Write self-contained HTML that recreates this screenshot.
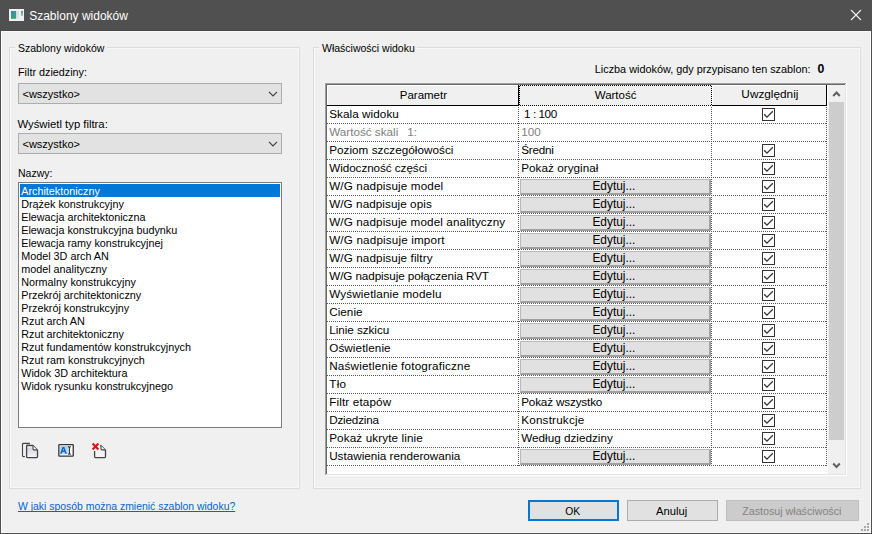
<!DOCTYPE html>
<html><head><meta charset="utf-8"><style>
html,body{margin:0;padding:0;}
body{width:872px;height:534px;position:relative;overflow:hidden;background:#f0f0f0;font-family:"Liberation Sans", sans-serif;}
body>div{position:absolute;}
.t{white-space:nowrap;}
</style></head><body>
<div style="left:0px;top:0px;width:872px;height:31px;background:#505050"></div>
<div style="left:0px;top:30px;width:872px;height:1px;background:#484848"></div>
<div style="left:0px;top:0px;width:1px;height:534px;background:#4f4f4f"></div>
<div style="left:871px;top:0px;width:1px;height:534px;background:#4f4f4f"></div>
<div style="left:0px;top:533px;width:872px;height:1px;background:#4f4f4f"></div>
<div style="left:1px;top:31px;width:870px;height:1px;background:#fafafa"></div>
<div style="left:1px;top:31px;width:1px;height:502px;background:#fafafa"></div>
<div style="left:870px;top:31px;width:1px;height:502px;background:#fafafa"></div>
<div style="left:1px;top:532px;width:870px;height:1px;background:#fafafa"></div>
<svg style="position:absolute;left:8px;top:8px" width="17" height="14" viewBox="0 0 17 14">
<defs><linearGradient id="tg" x1="0" y1="0" x2="1" y2="1"><stop offset="0" stop-color="#4a7fb0"/><stop offset="1" stop-color="#2fb06a"/></linearGradient>
<linearGradient id="tg2" x1="0" y1="0" x2="0" y2="1"><stop offset="0" stop-color="#5a86c0"/><stop offset="1" stop-color="#8fe08f"/></linearGradient></defs>
<rect x="1" y="1" width="15" height="12" fill="#f0f0f0"/>
<rect x="3" y="3" width="5.2" height="7.8" fill="url(#tg)"/>
<rect x="9.3" y="3" width="1.6" height="8" fill="#dcdcdc"/>
<rect x="13" y="3" width="2" height="5" fill="url(#tg2)"/>
</svg>
<div class="t" style="left:29.2px;top:7.84px;height:16px;line-height:16px;font-size:12px;color:#fff;font-weight:normal;">Szablony widoków</div>
<svg style="position:absolute;left:848px;top:7px" width="16" height="16" viewBox="0 0 16 16"><path d="M3.4 3.4 L12.6 12.6 M12.6 3.4 L3.4 12.6" stroke="#fff" stroke-width="1.2" stroke-linecap="round"/></svg>
<div style="left:9px;top:47px;width:291px;height:442px;border:1px solid #dcdcdc;box-sizing:border-box;box-shadow:inset 0 0 0 1px #f8f8f8;"></div>
<div class="t" style="left:15px;top:40px;width:92px;height:14px;background:#f0f0f0"></div>
<div class="t" style="left:18px;top:41.36px;height:14px;line-height:14px;font-size:10.5px;color:#000;font-weight:normal;">Szablony widoków</div>
<div class="t" style="left:18px;top:65.26px;height:14px;line-height:14px;font-size:10.8px;color:#000;font-weight:normal;">Filtr dziedziny:</div>
<div style="left:18px;top:83px;width:264px;height:21px;background:#e2e2e2;border:1px solid #adadad;box-sizing:border-box;"></div>
<svg style="position:absolute;left:268px;top:91px" width="10" height="6" viewBox="0 0 10 6"><path d="M1 0.8 L5 4.8 L9 0.8" stroke="#404040" stroke-width="1.2" fill="none"/></svg>
<div class="t" style="left:22.5px;top:86.69px;height:14px;line-height:14px;font-size:11px;color:#000;font-weight:normal;">&lt;wszystko&gt;</div>
<div class="t" style="left:17.5px;top:116.58px;height:15px;line-height:15px;font-size:11.3px;color:#000;font-weight:normal;">Wyświetl typ filtra:</div>
<div style="left:18px;top:133px;width:264px;height:21px;background:#e2e2e2;border:1px solid #adadad;box-sizing:border-box;"></div>
<svg style="position:absolute;left:268px;top:141px" width="10" height="6" viewBox="0 0 10 6"><path d="M1 0.8 L5 4.8 L9 0.8" stroke="#404040" stroke-width="1.2" fill="none"/></svg>
<div class="t" style="left:22.5px;top:136.69px;height:14px;line-height:14px;font-size:11px;color:#000;font-weight:normal;">&lt;wszystko&gt;</div>
<div class="t" style="left:18px;top:165.86px;height:14px;line-height:14px;font-size:10.5px;color:#000;font-weight:normal;">Nazwy:</div>
<div style="left:18px;top:182px;width:264px;height:246px;background:#fff;border:1px solid #7b7b82;box-sizing:border-box;"></div>
<div style="left:20px;top:184px;width:260px;height:13px;background:#0078d7"></div>
<div class="t" style="left:21.2px;top:183.86px;height:14px;line-height:14px;font-size:10.8px;color:#fff;font-weight:normal;">Architektoniczny</div>
<div class="t" style="left:21.2px;top:196.86px;height:14px;line-height:14px;font-size:10.8px;color:#000;font-weight:normal;">Drążek konstrukcyjny</div>
<div class="t" style="left:21.2px;top:209.86px;height:14px;line-height:14px;font-size:10.8px;color:#000;font-weight:normal;">Elewacja architektoniczna</div>
<div class="t" style="left:21.2px;top:222.86px;height:14px;line-height:14px;font-size:10.8px;color:#000;font-weight:normal;">Elewacja konstrukcyjna budynku</div>
<div class="t" style="left:21.2px;top:235.86px;height:14px;line-height:14px;font-size:10.8px;color:#000;font-weight:normal;">Elewacja ramy konstrukcyjnej</div>
<div class="t" style="left:21.2px;top:248.86px;height:14px;line-height:14px;font-size:10.8px;color:#000;font-weight:normal;">Model 3D arch AN</div>
<div class="t" style="left:21.2px;top:261.86px;height:14px;line-height:14px;font-size:10.8px;color:#000;font-weight:normal;">model analityczny</div>
<div class="t" style="left:21.2px;top:274.86px;height:14px;line-height:14px;font-size:10.8px;color:#000;font-weight:normal;">Normalny konstrukcyjny</div>
<div class="t" style="left:21.2px;top:287.86px;height:14px;line-height:14px;font-size:10.8px;color:#000;font-weight:normal;">Przekrój architektoniczny</div>
<div class="t" style="left:21.2px;top:300.86px;height:14px;line-height:14px;font-size:10.8px;color:#000;font-weight:normal;">Przekrój konstrukcyjny</div>
<div class="t" style="left:21.2px;top:313.86px;height:14px;line-height:14px;font-size:10.8px;color:#000;font-weight:normal;">Rzut arch AN</div>
<div class="t" style="left:21.2px;top:326.86px;height:14px;line-height:14px;font-size:10.8px;color:#000;font-weight:normal;">Rzut architektoniczny</div>
<div class="t" style="left:21.2px;top:339.86px;height:14px;line-height:14px;font-size:10.8px;color:#000;font-weight:normal;">Rzut fundamentów konstrukcyjnych</div>
<div class="t" style="left:21.2px;top:352.86px;height:14px;line-height:14px;font-size:10.8px;color:#000;font-weight:normal;">Rzut ram konstrukcyjnych</div>
<div class="t" style="left:21.2px;top:365.86px;height:14px;line-height:14px;font-size:10.8px;color:#000;font-weight:normal;">Widok 3D architektura</div>
<div class="t" style="left:21.2px;top:378.86px;height:14px;line-height:14px;font-size:10.8px;color:#000;font-weight:normal;">Widok rysunku konstrukcyjnego</div>
<svg style="position:absolute;left:20px;top:440px" width="20" height="20" viewBox="0 0 20 20">
<defs><linearGradient id="pg" x1="0" y1="0" x2="0" y2="1"><stop offset="0" stop-color="#ffffff"/><stop offset="0.12" stop-color="#ffffff"/><stop offset="0.2" stop-color="#d6d6de"/><stop offset="1" stop-color="#f6f6f8"/></linearGradient></defs>
<path d="M9.9 3.5 H3.4 Q2.6 3.5 2.6 4.3 V15.7 Q2.6 16.5 3.4 16.5 H4.8" stroke="#444" stroke-width="1.3" fill="none"/>
<path d="M3.3 4.2 H6 V16 H3.3 Z" fill="#f2f2f6"/>
<path d="M7.4 5.5 H12.9 L17.5 10.1 V16.8 Q17.5 17.6 16.7 17.6 H7.4 Q6.6 17.6 6.6 16.8 V6.3 Q6.6 5.5 7.4 5.5 Z" stroke="#444" stroke-width="1.3" fill="url(#pg)" stroke-linejoin="round"/>
<path d="M13 5.8 V9.1 Q13 9.9 13.8 9.9 H17.3" stroke="#444" stroke-width="1.1" fill="#fff"/>
</svg>
<svg style="position:absolute;left:56px;top:440px" width="20" height="20" viewBox="0 0 20 20">
<defs><linearGradient id="hg" x1="0" y1="0" x2="1" y2="1"><stop offset="0" stop-color="#8cc4ec"/><stop offset="1" stop-color="#c4e4f8"/></linearGradient></defs>
<rect x="2.85" y="4.55" width="14.4" height="11.5" rx="0.6" stroke="#333" stroke-width="1.3" fill="#fff"/>
<rect x="4.3" y="6.1" width="8" height="8.2" fill="url(#hg)"/>
<path fill-rule="evenodd" fill="#1565c8" d="M4 13.8 L6.6 6.9 L8.3 6.9 L10.9 13.8 L9.2 13.8 L8.6 12.1 L6.3 12.1 L5.7 13.8 Z M6.8 10.6 L7.45 8.6 L8.1 10.6 Z"/>
<path d="M12 6.6 Q13.4 6.6 13.4 7.8 Q13.4 6.6 14.8 6.6 M13.4 7.4 V13.6 M12 14.3 Q13.4 14.3 13.4 13.1 Q13.4 14.3 14.8 14.3" stroke="#333" stroke-width="1.15" fill="none"/>
</svg>
<svg style="position:absolute;left:88px;top:440px" width="20" height="20" viewBox="0 0 20 20">
<path d="M12.2 5.6 H13 L17.5 10.1 V16.8 Q17.5 17.6 16.7 17.6 H7.4 Q6.6 17.6 6.6 16.8 V11" stroke="#444" stroke-width="1.3" fill="#f4f4f6" stroke-linejoin="round"/>
<path d="M13 5.8 V9.1 Q13 9.9 13.8 9.9 H17.3" stroke="#444" stroke-width="1.1" fill="#fff"/>
<path d="M4.6 3.6 L10.4 9.4 M10.4 3.6 L4.6 9.4" stroke="#dc1414" stroke-width="2.1"/>
</svg>
<div class="t" style="left:18px;top:500.29px;height:14px;line-height:14px;font-size:10.43px;color:#0066cc;font-weight:normal;"><u style="text-decoration-skip-ink:none">W jaki sposób można zmienić szablon widoku?</u></div>
<div style="left:313px;top:47px;width:548px;height:442px;border:1px solid #dcdcdc;box-sizing:border-box;box-shadow:inset 0 0 0 1px #f8f8f8;"></div>
<div class="t" style="left:319px;top:40px;width:98px;height:14px;background:#f0f0f0"></div>
<div class="t" style="left:322px;top:41.36px;height:14px;line-height:14px;font-size:10.5px;color:#000;font-weight:normal;">Właściwości widoku</div>
<div class="t" style="left:594.8px;top:61.84px;height:14px;line-height:14px;font-size:10.85px;color:#000;font-weight:normal;">Liczba widoków, gdy przypisano ten szablon:</div>
<div class="t" style="left:817.4px;top:61.04px;height:16px;line-height:16px;font-size:12.3px;color:#000;font-weight:bold;">0</div>
<div style="left:325px;top:83px;width:522px;height:393px;background:#fff"></div>
<div style="left:325px;top:83px;width:521px;height:1px;background:#a0a0a0"></div>
<div style="left:325px;top:83px;width:1px;height:392px;background:#a0a0a0"></div>
<div style="left:326px;top:84px;width:519px;height:1px;background:#696969"></div>
<div style="left:326px;top:84px;width:1px;height:390px;background:#696969"></div>
<div style="left:326px;top:474px;width:520px;height:1px;background:#e3e3e3"></div>
<div style="left:845px;top:84px;width:1px;height:391px;background:#e3e3e3"></div>
<div style="left:327px;top:85px;width:500px;height:21px;background:#f0f0f0"></div>
<div style="left:327px;top:85px;width:191px;height:1px;background:#fff"></div>
<div style="left:327px;top:85px;width:1px;height:20px;background:#fff"></div>
<div style="left:518px;top:85px;width:1px;height:21px;background:#000"></div>
<div style="left:327px;top:105px;width:192px;height:1px;background:#000"></div>
<div style="left:519px;top:85px;width:193px;height:1px;background-image:linear-gradient(to right,#000 50%,transparent 50%);background-size:2px 1px;background-position:1px 0;"></div>
<div style="left:519px;top:105px;width:193px;height:1px;background-image:linear-gradient(to right,#000 50%,transparent 50%);background-size:2px 1px;background-position:1px 0;"></div>
<div style="left:519px;top:85px;width:1px;height:21px;background-image:linear-gradient(to bottom,#000 50%,transparent 50%);background-size:1px 2px;background-position:0 1px;"></div>
<div style="left:711px;top:85px;width:1px;height:21px;background-image:linear-gradient(to bottom,#000 50%,transparent 50%);background-size:1px 2px;background-position:0 1px;"></div>
<div style="left:712px;top:85px;width:114px;height:1px;background:#fff"></div>
<div style="left:712px;top:85px;width:1px;height:20px;background:#fff"></div>
<div style="left:826px;top:85px;width:1px;height:21px;background:#000"></div>
<div style="left:712px;top:105px;width:115px;height:1px;background:#000"></div>
<div class="t" style="left:328.40px;width:190px;text-align:center;top:87.52px;height:15px;line-height:15px;font-size:11.5px;color:#000;font-weight:normal;">Parametr</div>
<div class="t" style="left:520.60px;width:190px;text-align:center;top:87.52px;height:15px;line-height:15px;font-size:11.5px;color:#000;font-weight:normal;">Wartość</div>
<div class="t" style="left:712.90px;width:114px;text-align:center;top:87.41px;height:15px;line-height:15px;font-size:11.8px;color:#000;font-weight:normal;">Uwzględnij</div>
<div style="left:327px;top:123px;width:500px;height:1px;background-image:linear-gradient(to right,#585858 50%,transparent 50%);background-size:2px 1px;"></div>
<div class="t" style="left:329.2px;top:106.45px;height:15px;line-height:15px;font-size:11.7px;color:#000;font-weight:normal;letter-spacing:0.073px;">Skala widoku</div>
<div class="t" style="left:521.2px;top:106.45px;height:15px;line-height:15px;font-size:11.7px;color:#000;font-weight:normal;letter-spacing:-0.429px;">&nbsp;1 : 100</div>
<svg style="position:absolute;left:762px;top:108px" width="13" height="13" viewBox="0 0 13 13"><rect x="0.5" y="0.5" width="12" height="12" fill="#fff" stroke="#333" stroke-width="1"/><path d="M2.2 6.3 L5 9.1 L10.8 3.3" stroke="#333" stroke-width="1.3" fill="none"/></svg>
<div style="left:327px;top:141px;width:500px;height:1px;background-image:linear-gradient(to right,#585858 50%,transparent 50%);background-size:2px 1px;"></div>
<div class="t" style="left:407.2px;top:124.45px;height:15px;line-height:15px;font-size:11.7px;color:#808080;font-weight:normal;">1:</div>
<div class="t" style="left:329.2px;top:124.45px;height:15px;line-height:15px;font-size:11.7px;color:#808080;font-weight:normal;letter-spacing:0px;">Wartość skali</div>
<div class="t" style="left:521.2px;top:124.45px;height:15px;line-height:15px;font-size:11.7px;color:#808080;font-weight:normal;letter-spacing:0.05px;">100</div>
<div style="left:327px;top:159px;width:500px;height:1px;background-image:linear-gradient(to right,#585858 50%,transparent 50%);background-size:2px 1px;"></div>
<div class="t" style="left:329.2px;top:142.45px;height:15px;line-height:15px;font-size:11.7px;color:#000;font-weight:normal;letter-spacing:0.04px;">Poziom szczegółowości</div>
<div class="t" style="left:521.2px;top:142.45px;height:15px;line-height:15px;font-size:11.7px;color:#000;font-weight:normal;letter-spacing:-0.22px;">Średni</div>
<svg style="position:absolute;left:762px;top:144px" width="13" height="13" viewBox="0 0 13 13"><rect x="0.5" y="0.5" width="12" height="12" fill="#fff" stroke="#333" stroke-width="1"/><path d="M2.2 6.3 L5 9.1 L10.8 3.3" stroke="#333" stroke-width="1.3" fill="none"/></svg>
<div style="left:327px;top:177px;width:500px;height:1px;background-image:linear-gradient(to right,#585858 50%,transparent 50%);background-size:2px 1px;"></div>
<div class="t" style="left:329.2px;top:160.45px;height:15px;line-height:15px;font-size:11.7px;color:#000;font-weight:normal;letter-spacing:-0.056px;">Widoczność części</div>
<div class="t" style="left:521.2px;top:160.45px;height:15px;line-height:15px;font-size:11.7px;color:#000;font-weight:normal;letter-spacing:0.046px;">Pokaż oryginał</div>
<svg style="position:absolute;left:762px;top:162px" width="13" height="13" viewBox="0 0 13 13"><rect x="0.5" y="0.5" width="12" height="12" fill="#fff" stroke="#333" stroke-width="1"/><path d="M2.2 6.3 L5 9.1 L10.8 3.3" stroke="#333" stroke-width="1.3" fill="none"/></svg>
<div style="left:327px;top:195px;width:500px;height:1px;background-image:linear-gradient(to right,#585858 50%,transparent 50%);background-size:2px 1px;"></div>
<div class="t" style="left:329.2px;top:178.45px;height:15px;line-height:15px;font-size:11.7px;color:#000;font-weight:normal;letter-spacing:0.122px;">W/G nadpisuje model</div>
<div style="left:520px;top:179px;width:191px;height:16px;background:#e1e1e1;border-style:solid;border-color:#b9b9b9 #a0a0a0 #a0a0a0 #b9b9b9;border-width:1px 2px 2px 1px;box-sizing:border-box;"></div>
<div class="t" style="left:518.90px;width:190px;text-align:center;top:179.18px;height:15px;line-height:15px;font-size:11.9px;color:#000;font-weight:normal;">Edytuj...</div>
<svg style="position:absolute;left:762px;top:180px" width="13" height="13" viewBox="0 0 13 13"><rect x="0.5" y="0.5" width="12" height="12" fill="#fff" stroke="#333" stroke-width="1"/><path d="M2.2 6.3 L5 9.1 L10.8 3.3" stroke="#333" stroke-width="1.3" fill="none"/></svg>
<div style="left:327px;top:213px;width:500px;height:1px;background-image:linear-gradient(to right,#585858 50%,transparent 50%);background-size:2px 1px;"></div>
<div class="t" style="left:329.2px;top:196.45px;height:15px;line-height:15px;font-size:11.7px;color:#000;font-weight:normal;letter-spacing:0.071px;">W/G nadpisuje opis</div>
<div style="left:520px;top:197px;width:191px;height:16px;background:#e1e1e1;border-style:solid;border-color:#b9b9b9 #a0a0a0 #a0a0a0 #b9b9b9;border-width:1px 2px 2px 1px;box-sizing:border-box;"></div>
<div class="t" style="left:518.90px;width:190px;text-align:center;top:197.18px;height:15px;line-height:15px;font-size:11.9px;color:#000;font-weight:normal;">Edytuj...</div>
<svg style="position:absolute;left:762px;top:198px" width="13" height="13" viewBox="0 0 13 13"><rect x="0.5" y="0.5" width="12" height="12" fill="#fff" stroke="#333" stroke-width="1"/><path d="M2.2 6.3 L5 9.1 L10.8 3.3" stroke="#333" stroke-width="1.3" fill="none"/></svg>
<div style="left:327px;top:231px;width:500px;height:1px;background-image:linear-gradient(to right,#585858 50%,transparent 50%);background-size:2px 1px;"></div>
<div class="t" style="left:329.2px;top:214.45px;height:15px;line-height:15px;font-size:11.7px;color:#000;font-weight:normal;letter-spacing:0.107px;">W/G nadpisuje model analityczny</div>
<div style="left:520px;top:215px;width:191px;height:16px;background:#e1e1e1;border-style:solid;border-color:#b9b9b9 #a0a0a0 #a0a0a0 #b9b9b9;border-width:1px 2px 2px 1px;box-sizing:border-box;"></div>
<div class="t" style="left:518.90px;width:190px;text-align:center;top:215.18px;height:15px;line-height:15px;font-size:11.9px;color:#000;font-weight:normal;">Edytuj...</div>
<svg style="position:absolute;left:762px;top:216px" width="13" height="13" viewBox="0 0 13 13"><rect x="0.5" y="0.5" width="12" height="12" fill="#fff" stroke="#333" stroke-width="1"/><path d="M2.2 6.3 L5 9.1 L10.8 3.3" stroke="#333" stroke-width="1.3" fill="none"/></svg>
<div style="left:327px;top:249px;width:500px;height:1px;background-image:linear-gradient(to right,#585858 50%,transparent 50%);background-size:2px 1px;"></div>
<div class="t" style="left:329.2px;top:232.45px;height:15px;line-height:15px;font-size:11.7px;color:#000;font-weight:normal;letter-spacing:0.153px;">W/G nadpisuje import</div>
<div style="left:520px;top:233px;width:191px;height:16px;background:#e1e1e1;border-style:solid;border-color:#b9b9b9 #a0a0a0 #a0a0a0 #b9b9b9;border-width:1px 2px 2px 1px;box-sizing:border-box;"></div>
<div class="t" style="left:518.90px;width:190px;text-align:center;top:233.18px;height:15px;line-height:15px;font-size:11.9px;color:#000;font-weight:normal;">Edytuj...</div>
<svg style="position:absolute;left:762px;top:234px" width="13" height="13" viewBox="0 0 13 13"><rect x="0.5" y="0.5" width="12" height="12" fill="#fff" stroke="#333" stroke-width="1"/><path d="M2.2 6.3 L5 9.1 L10.8 3.3" stroke="#333" stroke-width="1.3" fill="none"/></svg>
<div style="left:327px;top:267px;width:500px;height:1px;background-image:linear-gradient(to right,#585858 50%,transparent 50%);background-size:2px 1px;"></div>
<div class="t" style="left:329.2px;top:250.45px;height:15px;line-height:15px;font-size:11.7px;color:#000;font-weight:normal;letter-spacing:0.105px;">W/G nadpisuje filtry</div>
<div style="left:520px;top:251px;width:191px;height:16px;background:#e1e1e1;border-style:solid;border-color:#b9b9b9 #a0a0a0 #a0a0a0 #b9b9b9;border-width:1px 2px 2px 1px;box-sizing:border-box;"></div>
<div class="t" style="left:518.90px;width:190px;text-align:center;top:251.18px;height:15px;line-height:15px;font-size:11.9px;color:#000;font-weight:normal;">Edytuj...</div>
<svg style="position:absolute;left:762px;top:252px" width="13" height="13" viewBox="0 0 13 13"><rect x="0.5" y="0.5" width="12" height="12" fill="#fff" stroke="#333" stroke-width="1"/><path d="M2.2 6.3 L5 9.1 L10.8 3.3" stroke="#333" stroke-width="1.3" fill="none"/></svg>
<div style="left:327px;top:285px;width:500px;height:1px;background-image:linear-gradient(to right,#585858 50%,transparent 50%);background-size:2px 1px;"></div>
<div class="t" style="left:329.2px;top:268.45px;height:15px;line-height:15px;font-size:11.7px;color:#000;font-weight:normal;letter-spacing:-0.089px;">W/G nadpisuje połączenia RVT</div>
<div style="left:520px;top:269px;width:191px;height:16px;background:#e1e1e1;border-style:solid;border-color:#b9b9b9 #a0a0a0 #a0a0a0 #b9b9b9;border-width:1px 2px 2px 1px;box-sizing:border-box;"></div>
<div class="t" style="left:518.90px;width:190px;text-align:center;top:269.18px;height:15px;line-height:15px;font-size:11.9px;color:#000;font-weight:normal;">Edytuj...</div>
<svg style="position:absolute;left:762px;top:270px" width="13" height="13" viewBox="0 0 13 13"><rect x="0.5" y="0.5" width="12" height="12" fill="#fff" stroke="#333" stroke-width="1"/><path d="M2.2 6.3 L5 9.1 L10.8 3.3" stroke="#333" stroke-width="1.3" fill="none"/></svg>
<div style="left:327px;top:303px;width:500px;height:1px;background-image:linear-gradient(to right,#585858 50%,transparent 50%);background-size:2px 1px;"></div>
<div class="t" style="left:329.2px;top:286.45px;height:15px;line-height:15px;font-size:11.7px;color:#000;font-weight:normal;letter-spacing:0.144px;">Wyświetlanie modelu</div>
<div style="left:520px;top:287px;width:191px;height:16px;background:#e1e1e1;border-style:solid;border-color:#b9b9b9 #a0a0a0 #a0a0a0 #b9b9b9;border-width:1px 2px 2px 1px;box-sizing:border-box;"></div>
<div class="t" style="left:518.90px;width:190px;text-align:center;top:287.18px;height:15px;line-height:15px;font-size:11.9px;color:#000;font-weight:normal;">Edytuj...</div>
<svg style="position:absolute;left:762px;top:288px" width="13" height="13" viewBox="0 0 13 13"><rect x="0.5" y="0.5" width="12" height="12" fill="#fff" stroke="#333" stroke-width="1"/><path d="M2.2 6.3 L5 9.1 L10.8 3.3" stroke="#333" stroke-width="1.3" fill="none"/></svg>
<div style="left:327px;top:321px;width:500px;height:1px;background-image:linear-gradient(to right,#585858 50%,transparent 50%);background-size:2px 1px;"></div>
<div class="t" style="left:329.2px;top:304.45px;height:15px;line-height:15px;font-size:11.7px;color:#000;font-weight:normal;letter-spacing:0.04px;">Cienie</div>
<div style="left:520px;top:305px;width:191px;height:16px;background:#e1e1e1;border-style:solid;border-color:#b9b9b9 #a0a0a0 #a0a0a0 #b9b9b9;border-width:1px 2px 2px 1px;box-sizing:border-box;"></div>
<div class="t" style="left:518.90px;width:190px;text-align:center;top:305.18px;height:15px;line-height:15px;font-size:11.9px;color:#000;font-weight:normal;">Edytuj...</div>
<svg style="position:absolute;left:762px;top:306px" width="13" height="13" viewBox="0 0 13 13"><rect x="0.5" y="0.5" width="12" height="12" fill="#fff" stroke="#333" stroke-width="1"/><path d="M2.2 6.3 L5 9.1 L10.8 3.3" stroke="#333" stroke-width="1.3" fill="none"/></svg>
<div style="left:327px;top:339px;width:500px;height:1px;background-image:linear-gradient(to right,#585858 50%,transparent 50%);background-size:2px 1px;"></div>
<div class="t" style="left:329.2px;top:322.45px;height:15px;line-height:15px;font-size:11.7px;color:#000;font-weight:normal;letter-spacing:-0.036px;">Linie szkicu</div>
<div style="left:520px;top:323px;width:191px;height:16px;background:#e1e1e1;border-style:solid;border-color:#b9b9b9 #a0a0a0 #a0a0a0 #b9b9b9;border-width:1px 2px 2px 1px;box-sizing:border-box;"></div>
<div class="t" style="left:518.90px;width:190px;text-align:center;top:323.18px;height:15px;line-height:15px;font-size:11.9px;color:#000;font-weight:normal;">Edytuj...</div>
<svg style="position:absolute;left:762px;top:324px" width="13" height="13" viewBox="0 0 13 13"><rect x="0.5" y="0.5" width="12" height="12" fill="#fff" stroke="#333" stroke-width="1"/><path d="M2.2 6.3 L5 9.1 L10.8 3.3" stroke="#333" stroke-width="1.3" fill="none"/></svg>
<div style="left:327px;top:357px;width:500px;height:1px;background-image:linear-gradient(to right,#585858 50%,transparent 50%);background-size:2px 1px;"></div>
<div class="t" style="left:329.2px;top:340.45px;height:15px;line-height:15px;font-size:11.7px;color:#000;font-weight:normal;letter-spacing:0.1px;">Oświetlenie</div>
<div style="left:520px;top:341px;width:191px;height:16px;background:#e1e1e1;border-style:solid;border-color:#b9b9b9 #a0a0a0 #a0a0a0 #b9b9b9;border-width:1px 2px 2px 1px;box-sizing:border-box;"></div>
<div class="t" style="left:518.90px;width:190px;text-align:center;top:341.18px;height:15px;line-height:15px;font-size:11.9px;color:#000;font-weight:normal;">Edytuj...</div>
<svg style="position:absolute;left:762px;top:342px" width="13" height="13" viewBox="0 0 13 13"><rect x="0.5" y="0.5" width="12" height="12" fill="#fff" stroke="#333" stroke-width="1"/><path d="M2.2 6.3 L5 9.1 L10.8 3.3" stroke="#333" stroke-width="1.3" fill="none"/></svg>
<div style="left:327px;top:375px;width:500px;height:1px;background-image:linear-gradient(to right,#585858 50%,transparent 50%);background-size:2px 1px;"></div>
<div class="t" style="left:329.2px;top:358.45px;height:15px;line-height:15px;font-size:11.7px;color:#000;font-weight:normal;letter-spacing:0.184px;">Naświetlenie fotograficzne</div>
<div style="left:520px;top:359px;width:191px;height:16px;background:#e1e1e1;border-style:solid;border-color:#b9b9b9 #a0a0a0 #a0a0a0 #b9b9b9;border-width:1px 2px 2px 1px;box-sizing:border-box;"></div>
<div class="t" style="left:518.90px;width:190px;text-align:center;top:359.18px;height:15px;line-height:15px;font-size:11.9px;color:#000;font-weight:normal;">Edytuj...</div>
<svg style="position:absolute;left:762px;top:360px" width="13" height="13" viewBox="0 0 13 13"><rect x="0.5" y="0.5" width="12" height="12" fill="#fff" stroke="#333" stroke-width="1"/><path d="M2.2 6.3 L5 9.1 L10.8 3.3" stroke="#333" stroke-width="1.3" fill="none"/></svg>
<div style="left:327px;top:393px;width:500px;height:1px;background-image:linear-gradient(to right,#585858 50%,transparent 50%);background-size:2px 1px;"></div>
<div class="t" style="left:329.2px;top:376.45px;height:15px;line-height:15px;font-size:11.7px;color:#000;font-weight:normal;letter-spacing:0.3px;">Tło</div>
<div style="left:520px;top:377px;width:191px;height:16px;background:#e1e1e1;border-style:solid;border-color:#b9b9b9 #a0a0a0 #a0a0a0 #b9b9b9;border-width:1px 2px 2px 1px;box-sizing:border-box;"></div>
<div class="t" style="left:518.90px;width:190px;text-align:center;top:377.18px;height:15px;line-height:15px;font-size:11.9px;color:#000;font-weight:normal;">Edytuj...</div>
<svg style="position:absolute;left:762px;top:378px" width="13" height="13" viewBox="0 0 13 13"><rect x="0.5" y="0.5" width="12" height="12" fill="#fff" stroke="#333" stroke-width="1"/><path d="M2.2 6.3 L5 9.1 L10.8 3.3" stroke="#333" stroke-width="1.3" fill="none"/></svg>
<div style="left:327px;top:411px;width:500px;height:1px;background-image:linear-gradient(to right,#585858 50%,transparent 50%);background-size:2px 1px;"></div>
<div class="t" style="left:329.2px;top:394.45px;height:15px;line-height:15px;font-size:11.7px;color:#000;font-weight:normal;letter-spacing:0.145px;">Filtr etapów</div>
<div class="t" style="left:521.2px;top:394.45px;height:15px;line-height:15px;font-size:11.7px;color:#000;font-weight:normal;letter-spacing:-0.154px;">Pokaż wszystko</div>
<svg style="position:absolute;left:762px;top:396px" width="13" height="13" viewBox="0 0 13 13"><rect x="0.5" y="0.5" width="12" height="12" fill="#fff" stroke="#333" stroke-width="1"/><path d="M2.2 6.3 L5 9.1 L10.8 3.3" stroke="#333" stroke-width="1.3" fill="none"/></svg>
<div style="left:327px;top:429px;width:500px;height:1px;background-image:linear-gradient(to right,#585858 50%,transparent 50%);background-size:2px 1px;"></div>
<div class="t" style="left:329.2px;top:412.45px;height:15px;line-height:15px;font-size:11.7px;color:#000;font-weight:normal;letter-spacing:-0.175px;">Dziedzina</div>
<div class="t" style="left:521.2px;top:412.45px;height:15px;line-height:15px;font-size:11.7px;color:#000;font-weight:normal;letter-spacing:0.2px;">Konstrukcje</div>
<svg style="position:absolute;left:762px;top:414px" width="13" height="13" viewBox="0 0 13 13"><rect x="0.5" y="0.5" width="12" height="12" fill="#fff" stroke="#333" stroke-width="1"/><path d="M2.2 6.3 L5 9.1 L10.8 3.3" stroke="#333" stroke-width="1.3" fill="none"/></svg>
<div style="left:327px;top:447px;width:500px;height:1px;background-image:linear-gradient(to right,#585858 50%,transparent 50%);background-size:2px 1px;"></div>
<div class="t" style="left:329.2px;top:430.45px;height:15px;line-height:15px;font-size:11.7px;color:#000;font-weight:normal;letter-spacing:0.118px;">Pokaż ukryte linie</div>
<div class="t" style="left:521.2px;top:430.45px;height:15px;line-height:15px;font-size:11.7px;color:#000;font-weight:normal;letter-spacing:0.013px;">Według dziedziny</div>
<svg style="position:absolute;left:762px;top:432px" width="13" height="13" viewBox="0 0 13 13"><rect x="0.5" y="0.5" width="12" height="12" fill="#fff" stroke="#333" stroke-width="1"/><path d="M2.2 6.3 L5 9.1 L10.8 3.3" stroke="#333" stroke-width="1.3" fill="none"/></svg>
<div style="left:327px;top:465px;width:500px;height:1px;background-image:linear-gradient(to right,#585858 50%,transparent 50%);background-size:2px 1px;"></div>
<div class="t" style="left:329.2px;top:448.45px;height:15px;line-height:15px;font-size:11.7px;color:#000;font-weight:normal;letter-spacing:-0.005px;">Ustawienia renderowania</div>
<div style="left:520px;top:449px;width:191px;height:16px;background:#e1e1e1;border-style:solid;border-color:#b9b9b9 #a0a0a0 #a0a0a0 #b9b9b9;border-width:1px 2px 2px 1px;box-sizing:border-box;"></div>
<div class="t" style="left:518.90px;width:190px;text-align:center;top:449.18px;height:15px;line-height:15px;font-size:11.9px;color:#000;font-weight:normal;">Edytuj...</div>
<svg style="position:absolute;left:762px;top:450px" width="13" height="13" viewBox="0 0 13 13"><rect x="0.5" y="0.5" width="12" height="12" fill="#fff" stroke="#333" stroke-width="1"/><path d="M2.2 6.3 L5 9.1 L10.8 3.3" stroke="#333" stroke-width="1.3" fill="none"/></svg>
<div style="left:518px;top:107px;width:1px;height:359px;background-image:linear-gradient(to bottom,#585858 50%,transparent 50%);background-size:1px 2px;"></div>
<div style="left:711px;top:107px;width:1px;height:359px;background-image:linear-gradient(to bottom,#585858 50%,transparent 50%);background-size:1px 2px;"></div>
<div style="left:826px;top:107px;width:1px;height:359px;background-image:linear-gradient(to bottom,#585858 50%,transparent 50%);background-size:1px 2px;"></div>
<div style="left:828px;top:85px;width:17px;height:389px;background:#f0f0f0"></div>
<div style="left:829px;top:102px;width:15px;height:338px;background:#cdcdcd"></div>
<svg style="position:absolute;left:832px;top:90px" width="10" height="8" viewBox="0 0 10 8"><path d="M1.2 6 L4.5 2.5 L7.8 6" stroke="#606060" stroke-width="2" fill="none"/></svg>
<svg style="position:absolute;left:832px;top:461px" width="10" height="8" viewBox="0 0 10 8"><path d="M1.2 2.5 L4.5 6 L7.8 2.5" stroke="#606060" stroke-width="2" fill="none"/></svg>
<div style="left:528px;top:500px;width:91px;height:21px;background:#e1e1e1;border:2px solid #0078d7;box-sizing:border-box;"></div>
<div class="t" style="left:527.80px;width:90px;text-align:center;top:504.73px;height:13px;line-height:13px;font-size:10.3px;color:#000;font-weight:normal;">OK</div>
<div style="left:627px;top:500px;width:91px;height:21px;background:#e1e1e1;border:1px solid #adadad;box-sizing:border-box;"></div>
<div class="t" style="left:626.60px;width:90px;text-align:center;top:503.62px;height:15px;line-height:15px;font-size:11.2px;color:#000;font-weight:normal;">Anuluj</div>
<div style="left:726px;top:500px;width:133px;height:21px;background:#cccccc;border:1px solid #bfbfbf;box-sizing:border-box;"></div>
<div class="t" style="left:725.80px;width:132px;text-align:center;top:504.29px;height:14px;line-height:14px;font-size:10.7px;color:#838383;font-weight:normal;">Zastosuj właściwości</div>
<div style="left:867px;top:523px;width:2px;height:2px;background:#a8a8a8"></div>
<div style="left:864px;top:526px;width:2px;height:2px;background:#a8a8a8"></div>
<div style="left:867px;top:526px;width:2px;height:2px;background:#a8a8a8"></div>
<div style="left:861px;top:529px;width:2px;height:2px;background:#a8a8a8"></div>
<div style="left:864px;top:529px;width:2px;height:2px;background:#a8a8a8"></div>
<div style="left:867px;top:529px;width:2px;height:2px;background:#a8a8a8"></div>
</body></html>
